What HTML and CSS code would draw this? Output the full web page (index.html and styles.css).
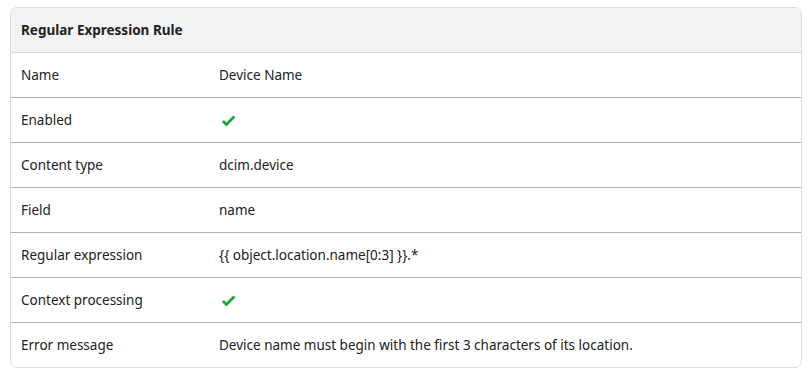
FILE: index.html
```html
<!DOCTYPE html>
<html>
<head>
<meta charset="utf-8">
<link rel="stylesheet" href="styles.css">
</head>
<body>
<div class="card">
  <div class="card-header">Regular Expression Rule</div>
  <div class="attrs">
    <div class="row"><div class="label">Name</div><div class="value">Device Name</div></div>
    <div class="row"><div class="label">Enabled</div><div class="value"><svg class="check" viewBox="0 0 24 24" width="17" height="17"><path d="M9 20.42L2.79 14.21L5.62 11.38L9 14.77L18.88 4.88L21.71 7.71L9 20.42Z"/></svg></div></div>
    <div class="row"><div class="label">Content type</div><div class="value">dcim.device</div></div>
    <div class="row"><div class="label">Field</div><div class="value">name</div></div>
    <div class="row"><div class="label">Regular expression</div><div class="value">{{ object.location.name[0:3] }}.*</div></div>
    <div class="row"><div class="label">Context processing</div><div class="value"><svg class="check" viewBox="0 0 24 24" width="17" height="17"><path d="M9 20.42L2.79 14.21L5.62 11.38L9 14.77L18.88 4.88L21.71 7.71L9 20.42Z"/></svg></div></div>
    <div class="row"><div class="label">Error message</div><div class="value">Device name must begin with the first 3 characters of its location.</div></div>
  </div>
</div>
</body>
</html>
```
FILE: styles.css
```css
html, body {
  margin: 0;
  padding: 0;
  background: #ffffff;
}
body {
  padding: 7px 10px 0 10px;
  font-family: "Noto Sans", "Open Sans", sans-serif;
  font-size: 13.5px;
  color: #212121;
}
.card {
  border: 1px solid #dcdcdc;
  border-radius: 7px;
  overflow: hidden;
  background: #fff;
}
.card-header {
  background: #f3f3f3;
  height: 44px;
  display: flex;
  align-items: center;
  padding: 0 10px;
  font-weight: bold;
  border-bottom: 1px solid #d4d4d4;
}
.row {
  display: flex;
  align-items: center;
  height: 44px;
  border-top: 1px solid #b0b0b0;
}
.row:first-child {
  border-top: none;
}
.label {
  width: 188px;
  padding: 0 10px;
  flex-shrink: 0;
}
.value {
  flex: 1;
  padding-right: 10px;
}
.check {
  display: block;
  fill: #23a53c;
  margin-left: 1px;
}
```
